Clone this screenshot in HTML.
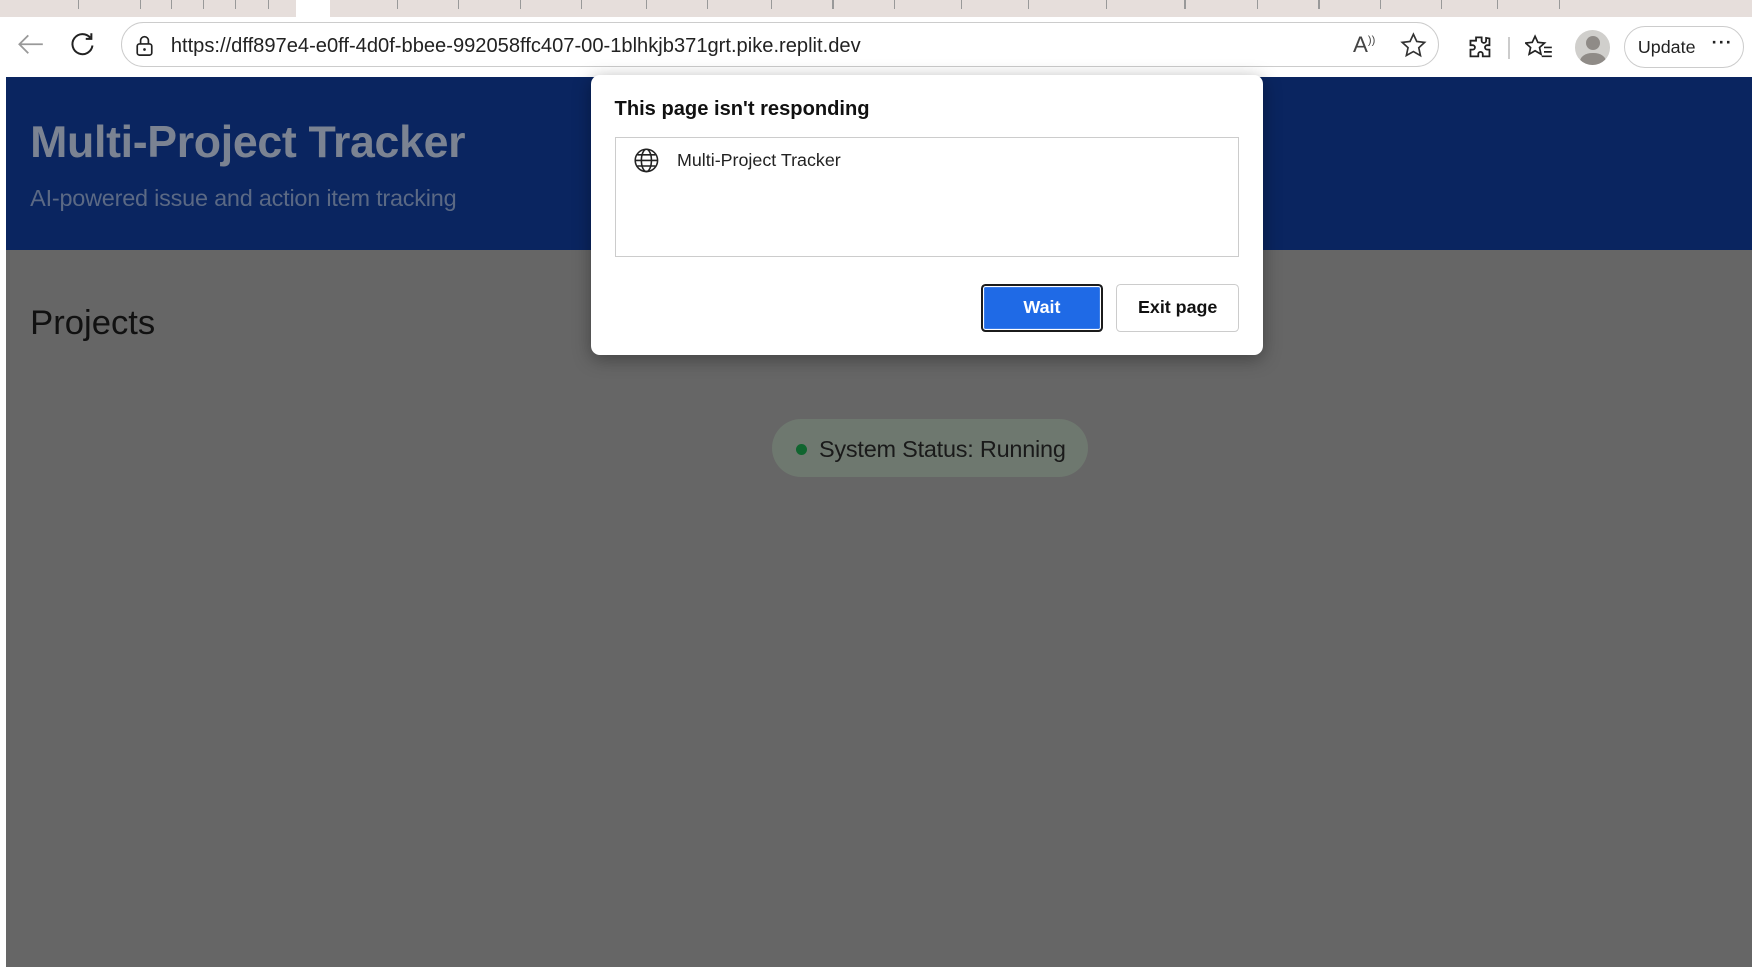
<!DOCTYPE html>
<html><head><meta charset="utf-8">
<style>
html,body{margin:0;padding:0;overflow:hidden}
body{width:1568px;height:865px;zoom:1.11735;font-family:"Liberation Sans",sans-serif;position:relative;background:#fff}
.tabs{position:absolute;left:0;top:0;width:1568px;height:15px;background:#e6dedb}
.tabs .t1{position:absolute;left:265px;top:0;width:30px;height:15px;background:#fff}
.tick{position:absolute;top:0;width:1px;height:8px;background:#999}
.bar{position:absolute;left:0;top:15px;width:1568px;height:54px;background:#fff}
.url{position:absolute;left:108px;top:20px;width:1180px;height:40px;border:1px solid #ccc;border-radius:21px;box-sizing:border-box}
.url span{position:absolute;left:44px;top:10px;font-size:18px;color:#222}
.upd{position:absolute;left:1453px;top:23px;width:108px;height:38px;border:1px solid #ccc;border-radius:20px;box-sizing:border-box;font-size:16px;color:#222}
.page{position:absolute;left:5px;top:69px;width:1563px;height:796px;background:#666}
.hdr{position:absolute;left:0;top:0;width:1563px;height:155px;background:#0a2560}
.hdr h1{position:absolute;left:22px;top:37px;margin:0;font-size:40px;color:#7b8392;font-weight:bold;letter-spacing:-0.3px}
.hdr p{position:absolute;left:22px;top:97px;margin:0;font-size:21px;color:#5b6984;letter-spacing:-0.2px}
.proj{position:absolute;left:22px;top:203px;font-size:31px;color:#111}
.status{position:absolute;left:686px;top:306px;width:283px;height:52px;border-radius:26px;background:#6e786f;font-size:21px;color:#1a1a1a}
.status i{position:absolute;left:21px;top:22px;width:10px;height:10px;border-radius:50%;background:#10652f}
.status span{position:absolute;left:42px;top:15px;letter-spacing:-0.2px}
.dlg{position:absolute;left:529px;top:67px;width:601px;height:251px;background:#fff;border-radius:8px;box-shadow:0 4px 16px rgba(0,0,0,.35)}
.dlg h2{position:absolute;left:21px;top:21px;margin:0;font-size:18px;color:#111;font-weight:bold}
.box{position:absolute;left:21px;top:56px;width:559px;height:107px;border:1px solid #ccc;box-sizing:border-box}
.box span{position:absolute;left:55px;top:10px;font-size:16px;color:#222}
.wait{position:absolute;left:349px;top:187px;width:109px;height:43px;box-sizing:border-box;border:2px solid #1b1b1b;border-radius:4px;background:#1f6ae6;box-shadow:inset 0 0 0 1px #fff;color:#fff;font-weight:bold;font-size:16px;text-align:center;line-height:39px}
.exit{position:absolute;left:470px;top:187px;width:110px;height:43px;box-sizing:border-box;border:1px solid #ccc;border-radius:4px;font-size:16px;color:#111;text-align:center;line-height:41px;font-weight:bold}
</style></head><body>
<div class="tabs"><div class="t1"></div>
<div class="tick" style="left:70px"></div><div class="tick" style="left:125px"></div><div class="tick" style="left:153px"></div><div class="tick" style="left:182px"></div><div class="tick" style="left:210px"></div><div class="tick" style="left:240px"></div>
<div class="tick" style="left:355px"></div><div class="tick" style="left:410px"></div><div class="tick" style="left:465px"></div><div class="tick" style="left:520px"></div><div class="tick" style="left:578px"></div><div class="tick" style="left:633px"></div><div class="tick" style="left:690px"></div><div class="tick" style="left:745px"></div><div class="tick" style="left:800px"></div><div class="tick" style="left:860px"></div><div class="tick" style="left:920px"></div><div class="tick" style="left:990px"></div><div class="tick" style="left:1060px"></div><div class="tick" style="left:1125px"></div><div class="tick" style="left:1180px"></div><div class="tick" style="left:1235px"></div><div class="tick" style="left:1290px"></div><div class="tick" style="left:1340px"></div><div class="tick" style="left:1395px"></div>
</div>
<div class="bar">
<svg style="position:absolute;left:14px;top:14px" width="26" height="22"><path d="M24 11H3M11 3L3 11L11 19" stroke="#999" stroke-width="1.6" fill="none"/></svg>
<svg style="position:absolute;left:62px;top:13px" width="26" height="26"><path d="M19 6A9 9 0 1 0 21 13M20 2V7H15" stroke="#222" stroke-width="1.8" fill="none"/></svg>
</div>
<div class="url">
<svg style="position:absolute;left:12px;top:10px" width="18" height="20"><rect x="2" y="8" width="13" height="10" rx="2" stroke="#222" fill="none" stroke-width="1.5"/><path d="M5 8V5a3.5 3.5 0 0 1 7 0v3" stroke="#222" fill="none" stroke-width="1.5"/><circle cx="8.5" cy="13" r="1.2" fill="#222"/></svg>
<span>https://dff897e4-e0ff-4d0f-bbee-992058ffc407-00-1blhkjb371grt.pike.replit.dev</span>
<span style="left:1102px;top:8px;font-size:20px;color:#444">A<sup style="font-size:10px">))</sup></span>
<svg style="position:absolute;left:1144px;top:8px" width="24" height="24"><path d="M12 2l3 6.5 7 .8-5.2 4.8 1.5 7L12 17.5 5.7 21l1.5-7L2 9.3l7-.8z" stroke="#333" stroke-width="1.5" fill="none"/></svg>
</div>
<svg style="position:absolute;left:1312px;top:30px" width="24" height="24"><path d="M9 3h5v3a2 2 0 1 0 4 0V3.5L21 4v6h-2a2 2 0 1 0 0 4h2v6h-6v-2a2 2 0 1 0-4 0v2H4v-6h2a2 2 0 1 0 0-4H4V6h5z" stroke="#222" stroke-width="1.6" fill="none"/></svg>
<div style="position:absolute;left:1350px;top:33px;width:1px;height:20px;background:#ccc"></div>
<svg style="position:absolute;left:1365px;top:30px" width="26" height="24"><path d="M9 2l2.5 5.5 6 .6-4.5 4 1.3 6L9 15l-5.3 3.1 1.3-6L.5 8.1l6-.6z" stroke="#222" stroke-width="1.5" fill="none"/><path d="M17 12h7M17 16h7M15 20h9" stroke="#222" stroke-width="1.5"/></svg>
<div style="position:absolute;left:1410px;top:27px;width:31px;height:31px;border-radius:50%;background:#d0cfcc;overflow:hidden"><div style="position:absolute;left:9px;top:5px;width:13px;height:13px;border-radius:50%;background:#8f8b87"></div><div style="position:absolute;left:4px;top:20px;width:23px;height:16px;border-radius:50%;background:#8f8b87"></div></div>
<div class="upd"><span style="position:absolute;left:12px;top:9px">Update</span><span style="position:absolute;left:78px;top:5px;font-weight:bold;letter-spacing:1px">···</span></div>
<div class="page">
<div class="hdr"><h1>Multi-Project Tracker</h1><p>AI-powered issue and action item tracking</p></div>
<div class="proj">Projects</div>
<div class="status"><i></i><span>System Status: Running</span></div>
</div>
<div class="dlg">
<h2>This page isn't responding</h2>
<div class="box">
<svg style="position:absolute;left:16px;top:8px" width="24" height="24"><circle cx="12" cy="12" r="10" stroke="#222" stroke-width="1.4" fill="none"/><ellipse cx="12" cy="12" rx="4.5" ry="10" stroke="#222" stroke-width="1.4" fill="none"/><path d="M2 12h20M4 7h16M4 17h16" stroke="#222" stroke-width="1.4"/></svg>
<span>Multi-Project Tracker</span></div>
<div class="wait">Wait</div>
<div class="exit">Exit page</div>
</div>
</body></html>
